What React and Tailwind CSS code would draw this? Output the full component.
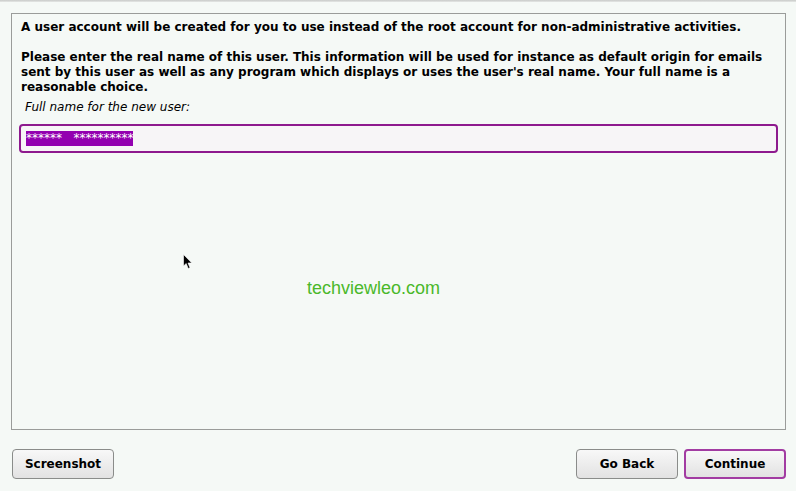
import React from "react";

export default function App() {
  const font = { fontFamily: '"DejaVu Sans", sans-serif' };
  return (
    <div className="w-[796px] h-[491px] bg-[#f5f9f6] relative overflow-hidden flex flex-col" style={font}>
      <div className="h-[2px] bg-gradient-to-b from-[#c8cac8] to-[#e6e8e6]" />
      <div className="flex-1 flex flex-col pl-[11px] pr-[10px] pt-[11px]">
        <div className="h-[417px] border border-[#9a9c9a] bg-[#f5f9f6] px-[9px] pt-[6px] relative">
          <p className="text-[12px] font-bold leading-[15px] text-black">
            A user account will be created for you to use instead of the root account for non-administrative activities.
          </p>
          <p className="text-[12px] font-bold leading-[15px] text-black mt-[15px] pr-[10px]">
            Please enter the real name of this user. This information will be used for instance as default origin for emails sent by this user as well as any program which displays or uses the user's real name. Your full name is a reasonable choice.
          </p>
          <p className="text-[12px] italic leading-[15px] text-black mt-[5px] pl-[4px]">Full name for the new user:</p>
          <div className="mt-[9px] -mx-[2px] h-[29px] rounded-[4px] border-2 border-[#8e1a8e] bg-[#f7f5f7] flex items-center px-[5px]">
            <span className="bg-[#9300b0] text-white text-[12px] leading-[15px] h-[15px] flex items-center whitespace-pre">
              {"******   **********"}
            </span>
          </div>
          <div className="absolute left-[295px] top-[261px] text-[18px] text-[#4ab82a]" style={{ fontFamily: '"Liberation Sans", Arial, sans-serif' }}>
            techviewleo.com
          </div>
          <svg className="absolute left-[171px] top-[240px]" width="10" height="16" viewBox="0 0 10 16">
            <path d="M0.5 0.5 L0.5 12 L3.2 9.5 L5.2 14.5 L7 13.8 L5 9 L8.8 9 Z" fill="#000" stroke="#fff" strokeWidth="0.6" />
          </svg>
        </div>
        <div className="flex items-center justify-between mt-[19px]">
          <button className="ml-[1px] w-[102px] h-[30px] rounded-[4px] border border-[#8a8c8a] bg-gradient-to-b from-[#f8f8f8] to-[#e2e2e2] text-[12px] font-bold text-black">
            Screenshot
          </button>
          <div className="flex gap-[6px]">
            <button className="w-[102px] h-[30px] rounded-[4px] border border-[#8a8c8a] bg-gradient-to-b from-[#f8f8f8] to-[#e2e2e2] text-[12px] font-bold text-black">
              Go Back
            </button>
            <button className="w-[102px] h-[30px] rounded-[4px] border-2 border-[#a23ca2] bg-gradient-to-b from-[#f8f8f8] to-[#e2e2e2] text-[12px] font-bold text-black">
              Continue
            </button>
          </div>
        </div>
      </div>
    </div>
  );
}
